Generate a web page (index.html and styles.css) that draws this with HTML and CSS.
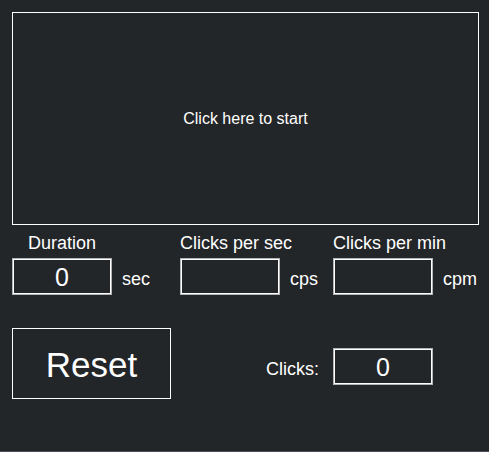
FILE: index.html
```html
<!DOCTYPE html>
<html>
<head>
<meta charset="utf-8">
<link rel="stylesheet" href="styles.css">
</head>
<body>
<div class="app">
  <div class="pad">Click here to start</div>
  <div class="stats">
    <div class="group g1">
      <div class="label center">Duration</div>
      <div class="line">
        <div class="field">0</div>
        <span class="unit">sec</span>
      </div>
    </div>
    <div class="group g2">
      <div class="label">Clicks per sec</div>
      <div class="line">
        <div class="field"></div>
        <span class="unit">cps</span>
      </div>
    </div>
    <div class="group g3">
      <div class="label">Clicks per min</div>
      <div class="line">
        <div class="field"></div>
        <span class="unit">cpm</span>
      </div>
    </div>
  </div>
  <div class="actions">
    <div class="reset">Reset</div>
    <div class="clicks">
      <span class="clicks-label">Clicks:</span>
      <div class="field">0</div>
    </div>
  </div>
</div>
</body>
</html>
```

FILE: styles.css
```css
html, body {
  margin: 0;
  padding: 0;
  background: #232629;
}
.app {
  box-sizing: border-box;
  height: 452px;
  padding: 12px 0 0 12px;
  border-bottom: 1px solid #4a4d5a;
  font-family: "Liberation Sans", Arial, sans-serif;
  color: #fff;
}
.pad {
  box-sizing: border-box;
  width: 467px;
  height: 213px;
  border: 1px solid #fff;
  display: flex;
  align-items: center;
  justify-content: center;
  font-size: 16px;
}
.stats {
  display: flex;
  margin-top: 8px;
}
.g1 { width: 168px; }
.g2 { width: 153px; }
.label {
  font-size: 18px;
  line-height: 21px;
  width: 100px;
  white-space: nowrap;
}
.label.center {
  display: flex;
  justify-content: center;
}
.line {
  display: flex;
  align-items: flex-start;
  margin-top: 4px;
}
.field {
  box-sizing: border-box;
  width: 100px;
  height: 37px;
  border: 1px solid #b4b4b4;
  box-shadow: inset 0 0 0 1px #fff;
  display: flex;
  align-items: center;
  justify-content: center;
  padding-top: 2px;
  font-size: 25px;
}
.unit {
  margin-left: 10px;
  margin-top: 11px;
  font-size: 18px;
  line-height: 21px;
}
.actions {
  display: flex;
  align-items: flex-start;
  margin-top: 33px;
}
.reset {
  box-sizing: border-box;
  width: 159px;
  height: 71px;
  border: 1px solid #fff;
  display: flex;
  align-items: center;
  justify-content: center;
  padding-top: 2px;
  font-size: 35px;
}
.clicks {
  display: flex;
  align-items: flex-start;
  margin-left: 95px;
  margin-top: 20px;
}
.clicks-label {
  font-size: 18px;
  line-height: 21px;
  margin-top: 11px;
  margin-right: 14px;
}
```
